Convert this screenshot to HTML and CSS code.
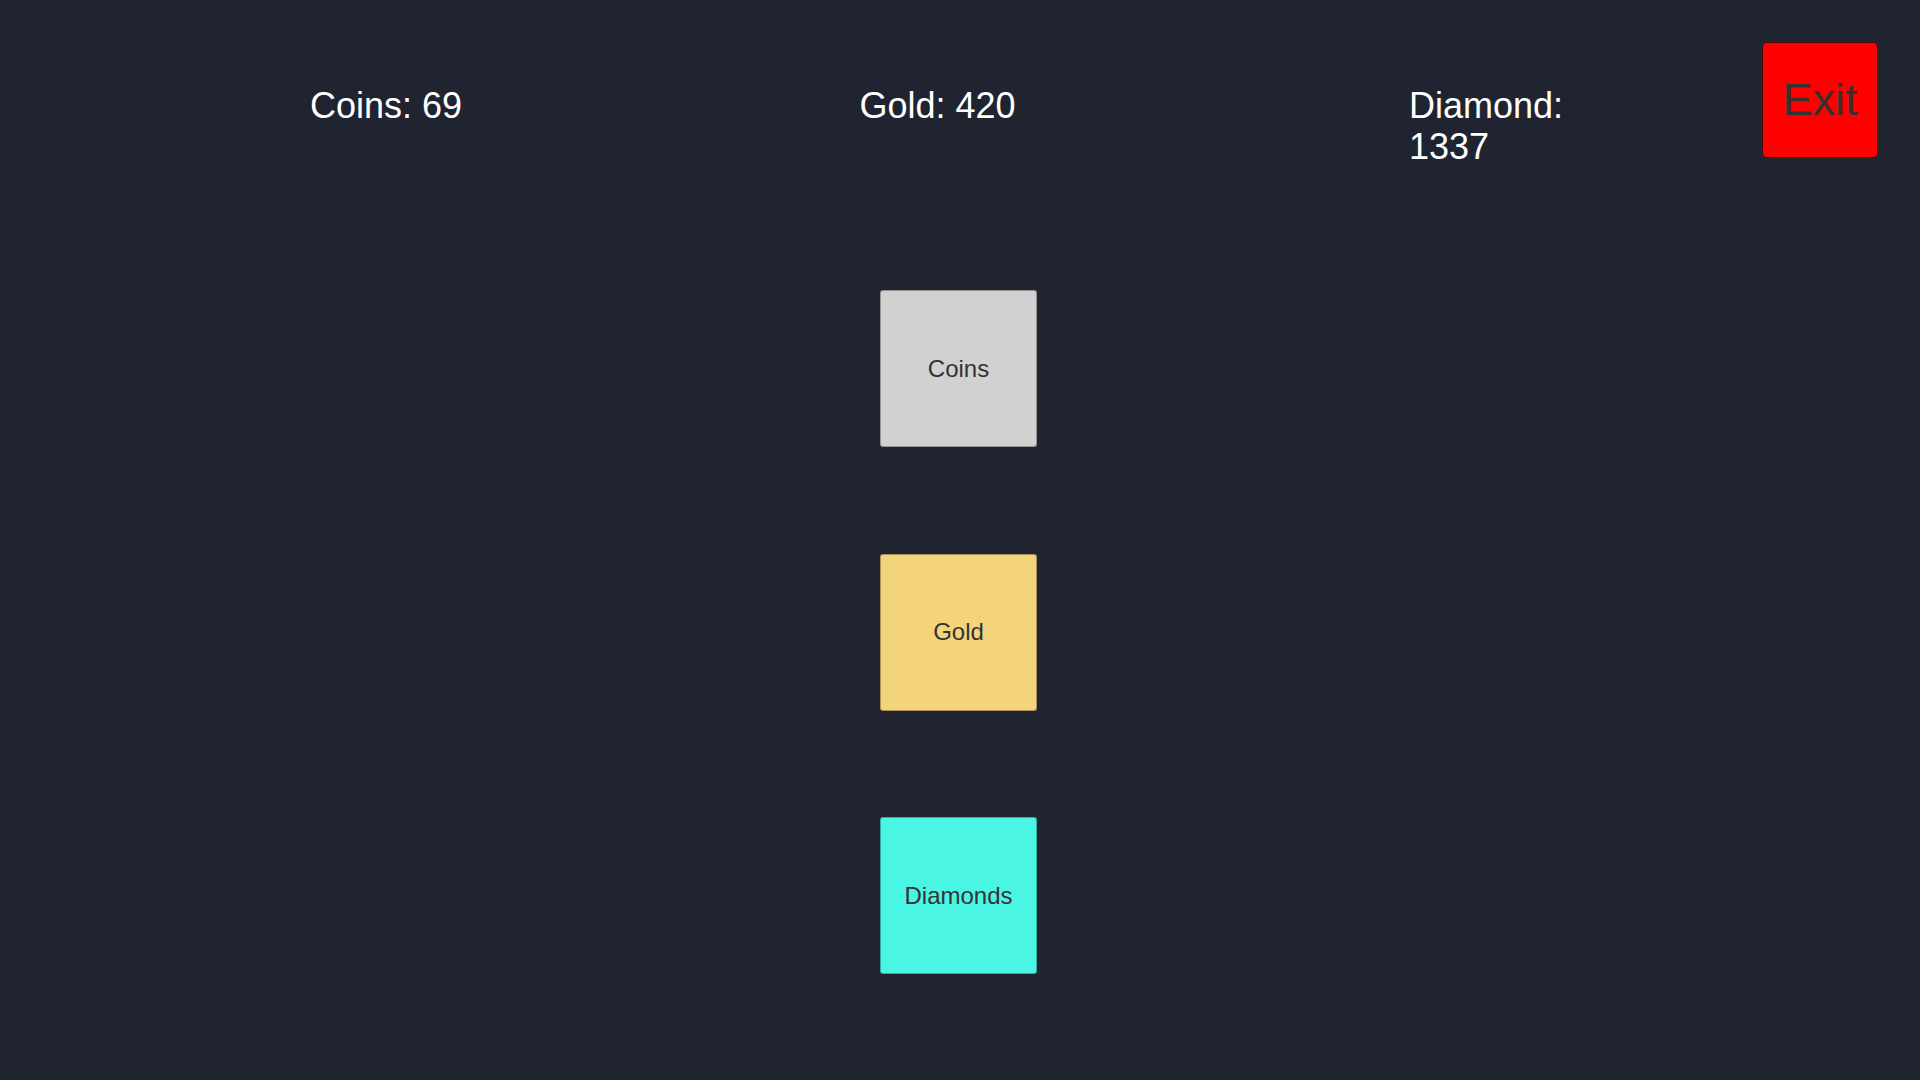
FILE: index.html
```html
<!DOCTYPE html>
<html lang="en">
<head>
<meta charset="utf-8">
<title>Currency</title>
<link rel="stylesheet" href="styles.css">
</head>
<body>
<header class="top">
  <div class="stats">
    <div class="stat">Coins: 69</div>
    <div class="stat">Gold: 420</div>
    <div class="stat">Diamond: 1337</div>
  </div>
  <button class="exit">Exit</button>
</header>
<main class="tiles">
  <button class="tile tile-coins">Coins</button>
  <button class="tile tile-gold">Gold</button>
  <button class="tile tile-diamonds">Diamonds</button>
</main>
</body>
</html>
```

FILE: styles.css
```css
html, body {
  margin: 0;
  padding: 0;
  height: 100%;
}
body {
  background: #1f2430;
  font-family: "Liberation Sans", Arial, sans-serif;
  overflow: hidden;
}
.top {
  display: flex;
  justify-content: space-between;
  align-items: flex-start;
  height: 200px;
  padding: 42px 42px 0 0;
  box-sizing: border-box;
}
.stats {
  display: grid;
  grid-template-columns: 549.5px 549.5px 200px;
  margin-left: 310px;
  margin-top: 43px;
}
.stat {
  color: #ffffff;
  font-size: 36px;
  line-height: 1.149;
}
.exit {
  width: 116px;
  height: 116px;
  background: #ff0000;
  border: 1px solid #4a0a0a;
  border-radius: 5px;
  color: #333333;
  font-family: "Liberation Sans", Arial, sans-serif;
  font-size: 45px;
  padding: 0;
  margin: 0;
}
.tiles {
  display: flex;
  flex-direction: column;
  align-items: center;
  gap: 106.5px;
  padding-top: 90px;
  padding-right: 3px;
}
.tile {
  width: 157px;
  height: 157px;
  border: 1px solid rgba(0, 0, 0, 0.3);
  border-radius: 3px;
  font-family: "Liberation Sans", Arial, sans-serif;
  font-size: 24px;
  color: #333333;
  padding: 0;
  margin: 0;
}
.tile-coins { background: #d1d1d1; }
.tile-gold { background: #f3d47b; }
.tile-diamonds { background: #4bf5e3; }
```
